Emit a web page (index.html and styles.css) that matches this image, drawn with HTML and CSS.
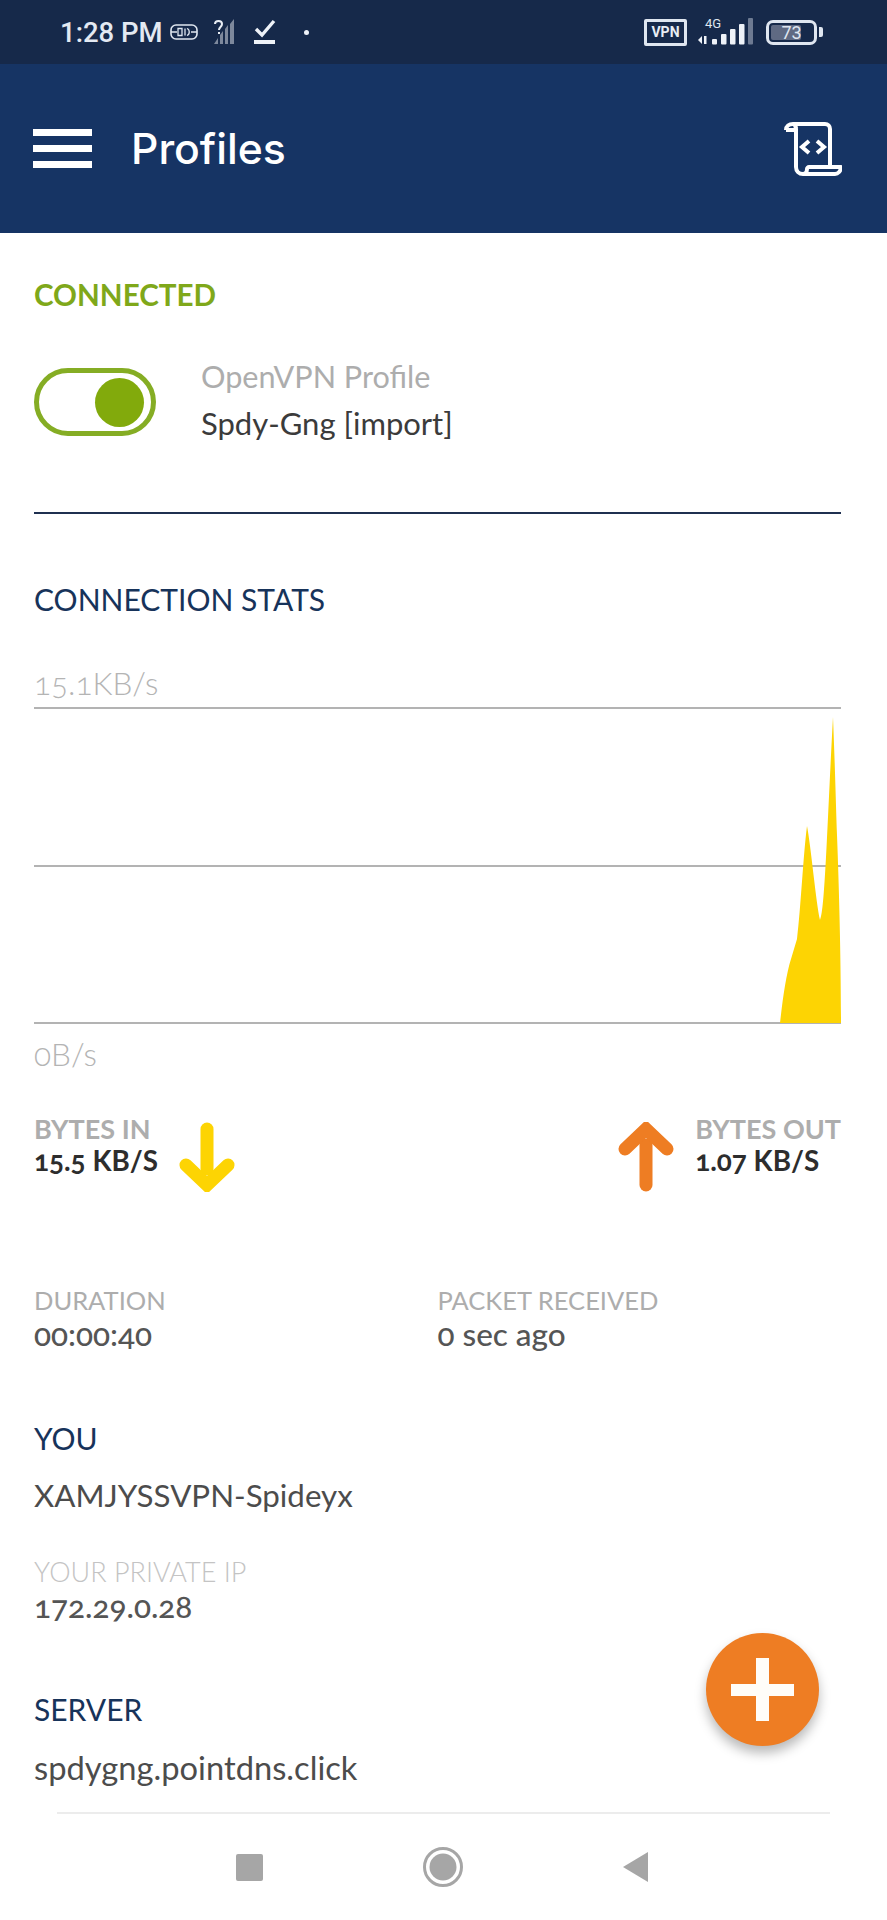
FILE: index.html
```html
<!DOCTYPE html>
<html lang="en">
<head>
<meta charset="utf-8">
<title>Profiles</title>
<link rel="stylesheet" href="styles.css">
</head>
<body>
<div class="phone">
  <div class="status">
    <div class="status-left">
      <span class="time">1:28 PM</span>
      <svg class="ic-sim" viewBox="0 0 28 18"><rect x="1" y="2" width="26" height="14" rx="5" fill="none" stroke="#dfe6f0" stroke-width="1.6"/><path d="M1 9h6M21 9h6M8 5.5h4v7H8zM15 5.5v7M17 5.5c3 1 3 6 0 7" fill="none" stroke="#dfe6f0" stroke-width="1.3"/></svg>
      <svg class="ic-nosig" viewBox="0 0 24 26"><path d="M2 25l4-6v6zM8 25v-9l3-4v13zM13 25V10l3-4v19zM18 25V5l4-5v25z" fill="#7d889c"/><path d="M3 5c0-4 7-4 7 0 0 3-3 3-3 6M7 13v2" fill="none" stroke="#e8edf4" stroke-width="2"/></svg>
      <svg class="ic-check" viewBox="0 0 22 26"><path d="M2 10l6 6L20 2" fill="none" stroke="#eef2f8" stroke-width="3.4"/><rect y="21" width="21" height="4" fill="#eef2f8"/></svg>
      <span class="dot"></span>
    </div>
    <div class="status-right">
      <span class="vpn">VPN</span>
      <svg class="ic-4g" viewBox="0 0 58 30"><text x="8" y="11" class="t4g">4G</text><path d="M1 23l4-4v8zM7 19h2.500v8H7z" fill="#eef2f8"/><rect x="15" y="22" width="5" height="5.500" rx="1" fill="#eef2f8"/><rect x="24" y="17" width="5.500" height="10.500" rx="1" fill="#eef2f8"/><rect x="33" y="12" width="5.500" height="15.500" rx="1" fill="#eef2f8"/><rect x="42" y="7" width="5.500" height="20.500" rx="1" fill="#eef2f8"/><rect x="51" y="1" width="5" height="26.500" rx="1" fill="#6d7a92"/></svg>
      <div class="battery"><span class="fill"></span><span class="pct">73</span></div>
      <span class="nub"></span>
    </div>
  </div>

  <header class="appbar">
    <div class="burger"><span></span><span></span><span></span></div>
    <h1 class="title">Profiles</h1>
    <svg class="ic-scroll" viewBox="0 0 58 54"><path d="M2 8c0-4 3-6 7-6h32c3 0 5 2 5 5v37M2 8h10c0-3-1-6-3-6M12 8v37c0 4 3 7 7 7h32c3 0 6-3 6-7H25c-1 0-2 1-2 2v0c0 3-2 5-4 5" fill="none" stroke="#fff" stroke-width="4" stroke-linejoin="round"/><path d="M25 19l-7 6 7 6M33 19l7 6-7 6" fill="none" stroke="#fff" stroke-width="4"/></svg>
  </header>

  <main class="content">
    <h2 class="state">CONNECTED</h2>
    <div class="profile">
      <div class="toggle"><span class="knob"></span></div>
      <div class="profile-text">
        <div class="profile-type">OpenVPN Profile</div>
        <div class="profile-name">Spdy-Gng [import]</div>
      </div>
    </div>
    <hr class="rule">

    <h2 class="section stats-head">CONNECTION STATS</h2>
    <div class="axis axis-top">15.1KB/s</div>
    <svg class="chart" viewBox="0 0 807 318" preserveAspectRatio="none">
      <line x1="0" y1="1" x2="807" y2="1" class="grid"/>
      <line x1="0" y1="159" x2="807" y2="159" class="grid"/>
      <line x1="0" y1="316" x2="807" y2="316" class="grid"/>
      <path d="M746 316C749 290 752 268 757 252L763 232C767 200 769 150 773 119 777 140 782 195 786 213 791 205 793 120 799 10 801 60 802 100 803 128 805 180 807 250 807 316Z" fill="#fdd403"/>
    </svg>
    <div class="axis axis-bottom">0B/s</div>

    <div class="bytes">
      <div class="bytes-group">
        <div>
          <div class="label strong">BYTES IN</div>
          <div class="value dark">15.5 KB/S</div>
        </div>
        <svg class="arrow" viewBox="0 0 56 70"><path d="M28 7v40" fill="none" stroke="#fdd403" stroke-width="13" stroke-linecap="round"/><path d="M7 43l21 20 21-20" fill="none" stroke="#fdd403" stroke-width="13" stroke-linecap="round" stroke-linejoin="miter"/></svg>
      </div>
      <div class="bytes-group">
        <svg class="arrow" viewBox="0 0 56 70"><path d="M28 63V23" fill="none" stroke="#ee7d23" stroke-width="13" stroke-linecap="round"/><path d="M7 27L28 7l21 20" fill="none" stroke="#ee7d23" stroke-width="13" stroke-linecap="round" stroke-linejoin="miter"/></svg>
        <div>
          <div class="label strong">BYTES OUT</div>
          <div class="value dark">1.07 KB/S</div>
        </div>
      </div>
    </div>

    <div class="pair">
      <div class="pair-col">
        <div class="label">DURATION</div>
        <div class="value big">00:00:40</div>
      </div>
      <div class="pair-col">
        <div class="label">PACKET RECEIVED</div>
        <div class="value big">0 sec ago</div>
      </div>
    </div>

    <h2 class="section you">YOU</h2>
    <div class="plain">XAMJYSSVPN-Spideyx</div>
    <div class="label light private">YOUR PRIVATE IP</div>
    <div class="value big">172.29.0.28</div>
    <h2 class="section server">SERVER</h2>
    <div class="plain host">spdygng.pointdns.click</div>
  </main>

  <button class="fab" aria-label="Add"><span class="plus"></span></button>

  <nav class="navbar">
    <span class="nav-square"></span>
    <svg class="nav-circle" viewBox="0 0 40 40"><circle cx="20" cy="20" r="18.5" fill="none" stroke="#a6a6a6" stroke-width="3"/><circle cx="20" cy="20" r="13.5" fill="#a6a6a6"/></svg>
    <svg class="nav-back" viewBox="0 0 26 30"><path d="M26 0v30L1 15z" fill="#a6a6a6"/></svg>
  </nav>
</div>
</body>
</html>
```
FILE: styles.css
```css
* { box-sizing: border-box; }
html, body { margin: 0; padding: 0; background: #fff; }
.phone { position: relative; width: 887px; height: 1920px; overflow: hidden; font-family: "Lato", "Liberation Sans", sans-serif; font-variant-numeric: oldstyle-nums; display: flex; flex-direction: column; }

.status { height: 64px; background: #16294a; display: flex; justify-content: space-between; align-items: center; padding: 0 64px 0 60px; color: #e8edf4; flex: none; }
.status-left, .status-right { display: flex; align-items: center; }
.time { font-family: "Roboto", sans-serif; font-size: 27.5px; font-weight: 500; color: #e3e9f2; font-variant-numeric: normal; }
.ic-sim { width: 28px; height: 18px; margin-left: 7px; }
.ic-nosig { width: 24px; height: 26px; margin-left: 14px; }
.ic-check { width: 22px; height: 26px; margin-left: 18px; }
.dot { width: 5px; height: 5px; border-radius: 50%; background: #eef2f8; margin-left: 28px; }
.vpn { width: 43px; height: 27px; border: 3px solid #dfe6f0; border-radius: 2px; font: 700 14px "Roboto", sans-serif; line-height: 21px; text-align: center; color: #e8edf4; }
.ic-4g { width: 58px; height: 30px; margin-left: 10px; }
.t4g { font: 400 13px "Roboto", sans-serif; fill: #dfe6f0; }
.battery { position: relative; width: 51px; height: 25px; margin-left: 11px; border: 3px solid #dfe6f0; border-radius: 7px; padding: 2px; }
.battery .fill { display: block; width: 73%; height: 100%; background: #5f6a83; border-radius: 2px; }
.battery .pct { position: absolute; inset: 0; text-align: center; font: 400 18px/19px "Roboto", sans-serif; color: #dfe6f0; }
.nub { width: 4px; height: 10px; margin-left: 2px; background: #dfe6f0; border-radius: 0 2px 2px 0; }

.appbar { height: 169px; background: #163464; display: flex; align-items: center; padding: 0 45px 0 33px; flex: none; }
.burger { width: 59px; display: flex; flex-direction: column; gap: 9px; }
.burger span { display: block; height: 7px; background: #fff; }
.title { margin: 0 0 0 39px; font-family: "Inter", sans-serif; font-size: 42.7px; font-weight: 500; color: #fff; flex: 1; }
.ic-scroll { width: 58px; height: 54px; }

.content { padding: 0 46px 0 34px; flex: 1; }
.state { margin: 45px 0 0; font-size: 29.6px; line-height: 34px; font-weight: 700; color: #7fa81a; }
.profile { display: flex; align-items: center; margin-top: 42px; }
.toggle { width: 122px; height: 68px; border: 5px solid #85ad24; border-radius: 34px; display: flex; justify-content: flex-end; align-items: center; padding-right: 7px; flex: none; }
.knob { width: 49px; height: 49px; border-radius: 50%; background: #82aa0c; }
.profile-text { margin-left: 45px; margin-bottom: 4px; }
.profile-type { font-size: 30.6px; line-height: 46px; color: #adadad; }
.profile-name { font-size: 31px; line-height: 46px; color: #3b3b3b; font-weight: 400; }
.rule { border: 0; height: 2px; background: #1f3050; margin: 0; margin-top: 62px; width: 807px; }
.section { margin: 0; font-size: 30px; line-height: 34px; font-weight: 400; color: #17335a; }
.stats-head { margin-top: 68px; }
.axis { font-size: 31.5px; line-height: 36px; font-weight: 300; color: #b4b4b4; }
.axis-top { margin-top: 49px; }
.chart { display: block; width: 807px; height: 318px; margin-top: 6px; }
.grid { stroke: #b3b3b3; stroke-width: 2; }
.axis-bottom { margin-top: 11px; }

.bytes { display: flex; justify-content: space-between; width: 807px; margin-top: 41px; }
.bytes-group { display: flex; align-items: flex-start; gap: 21px; }
.arrow { width: 56px; height: 70px; margin-top: 9px; }
.label { font-size: 25.5px; line-height: 32px; color: #adadad; }
.label.strong { font-weight: 700; font-size: 27px; }
.label.light { color: #c4c4c4; font-weight: 300; font-size: 27px; }
.value { font-size: 27.8px; line-height: 32px; font-weight: 700; }
.value.dark { color: #2d2d2d; }
.value.big { color: #555; font-size: 31.5px; line-height: 36px; font-weight: 500; }

.pair { display: flex; margin-top: 92px; }
.pair-col { width: 405px; }
.you { margin-top: 69px; }
.plain { font-size: 31.3px; line-height: 40px; color: #4c4c4c; margin-top: 20px; font-weight: 400; }
.plain.host { font-size: 32.7px; margin-top: 22px; }
.private { margin-top: 41px; }
.server { margin-top: 68px; }

.fab { position: absolute; left: 706px; top: 1633px; width: 113px; height: 113px; border: 0; border-radius: 50%; background: #ee7d23; box-shadow: 0 7px 12px rgba(0,0,0,.28); padding: 0; }
.plus { position: absolute; left: 25px; top: 25px; width: 63px; height: 63px; background: linear-gradient(#fffdf8,#fffdf8) center/13px 63px no-repeat, linear-gradient(#fffdf8,#fffdf8) center/63px 12px no-repeat; }

.navbar { position: absolute; left: 57px; right: 57px; top: 1812px; bottom: 0; border-top: 2px solid #ececec; display: flex; align-items: center; padding: 0 182px 0 179px; justify-content: space-between; }
.nav-square { width: 27px; height: 27px; background: #a6a6a6; border-radius: 2px; }
.nav-circle { width: 40px; height: 40px; }
.nav-back { width: 26px; height: 30px; }
```
